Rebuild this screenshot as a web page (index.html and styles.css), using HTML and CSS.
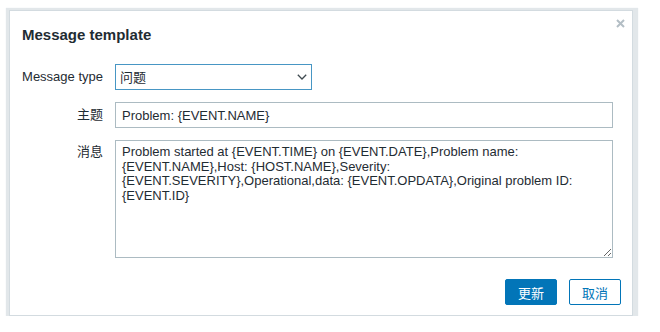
FILE: index.html
```html
<!DOCTYPE html>
<html lang="zh-CN">
<head>
  <meta charset="UTF-8">
  <title>Message template</title>
  <link rel="stylesheet" href="styles.css">
</head>
<body>
  <div class="dialog">
    <button class="dialog-close" title="Close">
      <svg width="9" height="9" viewBox="0 0 9 9"><path d="M1 1L8 8M8 1L1 8" stroke="#b3bec5" stroke-width="2"/></svg>
    </button>
    <h4 class="dialog-title">Message template</h4>

    <div class="form-grid">
      <label class="form-label">Message type</label>
      <div class="select-wrap">
        <select class="form-select">
          <option>问题</option>
          <option>恢复</option>
          <option>更新</option>
        </select>
        <svg class="select-arrow" width="10" height="6" viewBox="0 0 10 6"><path d="M0.8 0.8L5 5L9.2 0.8" fill="none" stroke="#3f4a50" stroke-width="1.3"/></svg>
      </div>

      <label class="form-label">主题</label>
      <input class="form-input" type="text" value="Problem: {EVENT.NAME}">

      <label class="form-label label-top">消息</label>
      <textarea class="form-textarea">Problem started at {EVENT.TIME} on {EVENT.DATE},Problem name:
{EVENT.NAME},Host: {HOST.NAME},Severity:
{EVENT.SEVERITY},Operational,data: {EVENT.OPDATA},Original problem ID:
{EVENT.ID}</textarea>
    </div>

    <div class="dialog-footer">
      <button class="btn btn-primary">更新</button>
      <button class="btn btn-alt">取消</button>
    </div>
  </div>
</body>
</html>
```

FILE: styles.css
```css
body {
  margin: 0;
  background: #fff;
  font-family: "Liberation Sans", Arial, "Noto Sans CJK SC", sans-serif;
  color: #1f2c33;
}
.dialog {
  position: relative;
  box-sizing: border-box;
  width: 624px;
  height: 306px;
  margin: 10px 0 0 9px;
  padding: 15px 11px 0 12px;
  background: #fff;
  border: 1px solid #d3dbe0;
  box-shadow: 1px 2px 1px 4px #e2e7ea;
}
.dialog-close {
  position: absolute;
  top: 8px;
  right: 7px;
  width: 9px;
  height: 9px;
  padding: 0;
  border: 0;
  background: none;
  display: flex;
}
.dialog-title {
  margin: 0;
  font-size: 15px;
  line-height: 18px;
  font-weight: bold;
  color: #1f2c33;
}
.form-grid {
  display: grid;
  grid-template-columns: 81px 498px;
  column-gap: 12px;
  row-gap: 12px;
  margin-top: 20px;
}
.form-label {
  font-size: 13px;
  line-height: 14.5px;
  text-align: right;
  align-self: center;
  white-space: nowrap;
}
.form-label.label-top {
  align-self: start;
  padding-top: 5px;
}
.select-wrap {
  position: relative;
  width: 197px;
}
.form-select {
  -webkit-appearance: none;
  appearance: none;
  box-sizing: border-box;
  width: 197px;
  height: 26px;
  margin: 0;
  padding: 0 20px 0 4px;
  font-family: "Liberation Sans", "Noto Sans CJK SC", sans-serif;
  font-size: 13px;
  color: #1f2c33;
  background: #fff;
  border: 1px solid #4796c4;
  border-radius: 0;
  outline: none;
}
.select-arrow {
  position: absolute;
  top: 10px;
  right: 5px;
  pointer-events: none;
}
.form-input {
  box-sizing: border-box;
  width: 498px;
  height: 26px;
  margin: 0;
  padding: 0 6px;
  font-family: "Liberation Sans", sans-serif;
  font-size: 13px;
  color: #1f2c33;
  border: 1px solid #acbbc2;
  border-radius: 0;
  outline: none;
}
.form-textarea {
  box-sizing: border-box;
  width: 498px;
  height: 118px;
  margin: 0;
  padding: 4px 6px;
  font-family: "Liberation Sans", sans-serif;
  font-size: 13px;
  line-height: 14.5px;
  color: #1f2c33;
  border: 1px solid #acbbc2;
  border-radius: 0;
  outline: none;
  resize: both;
  white-space: pre-wrap;
}
.dialog-footer {
  display: flex;
  justify-content: flex-end;
  gap: 12px;
  margin-top: 21px;
}
.btn {
  box-sizing: border-box;
  width: 52px;
  height: 26px;
  padding: 0;
  font-family: "Noto Sans CJK SC", sans-serif;
  font-size: 13px;
  border-radius: 2px;
  cursor: pointer;
}
.btn-primary {
  background: #0275b8;
  border: 1px solid #0275b8;
  color: #fff;
}
.btn-alt {
  background: #fff;
  border: 1px solid #0275b8;
  color: #0275b8;
}
```
